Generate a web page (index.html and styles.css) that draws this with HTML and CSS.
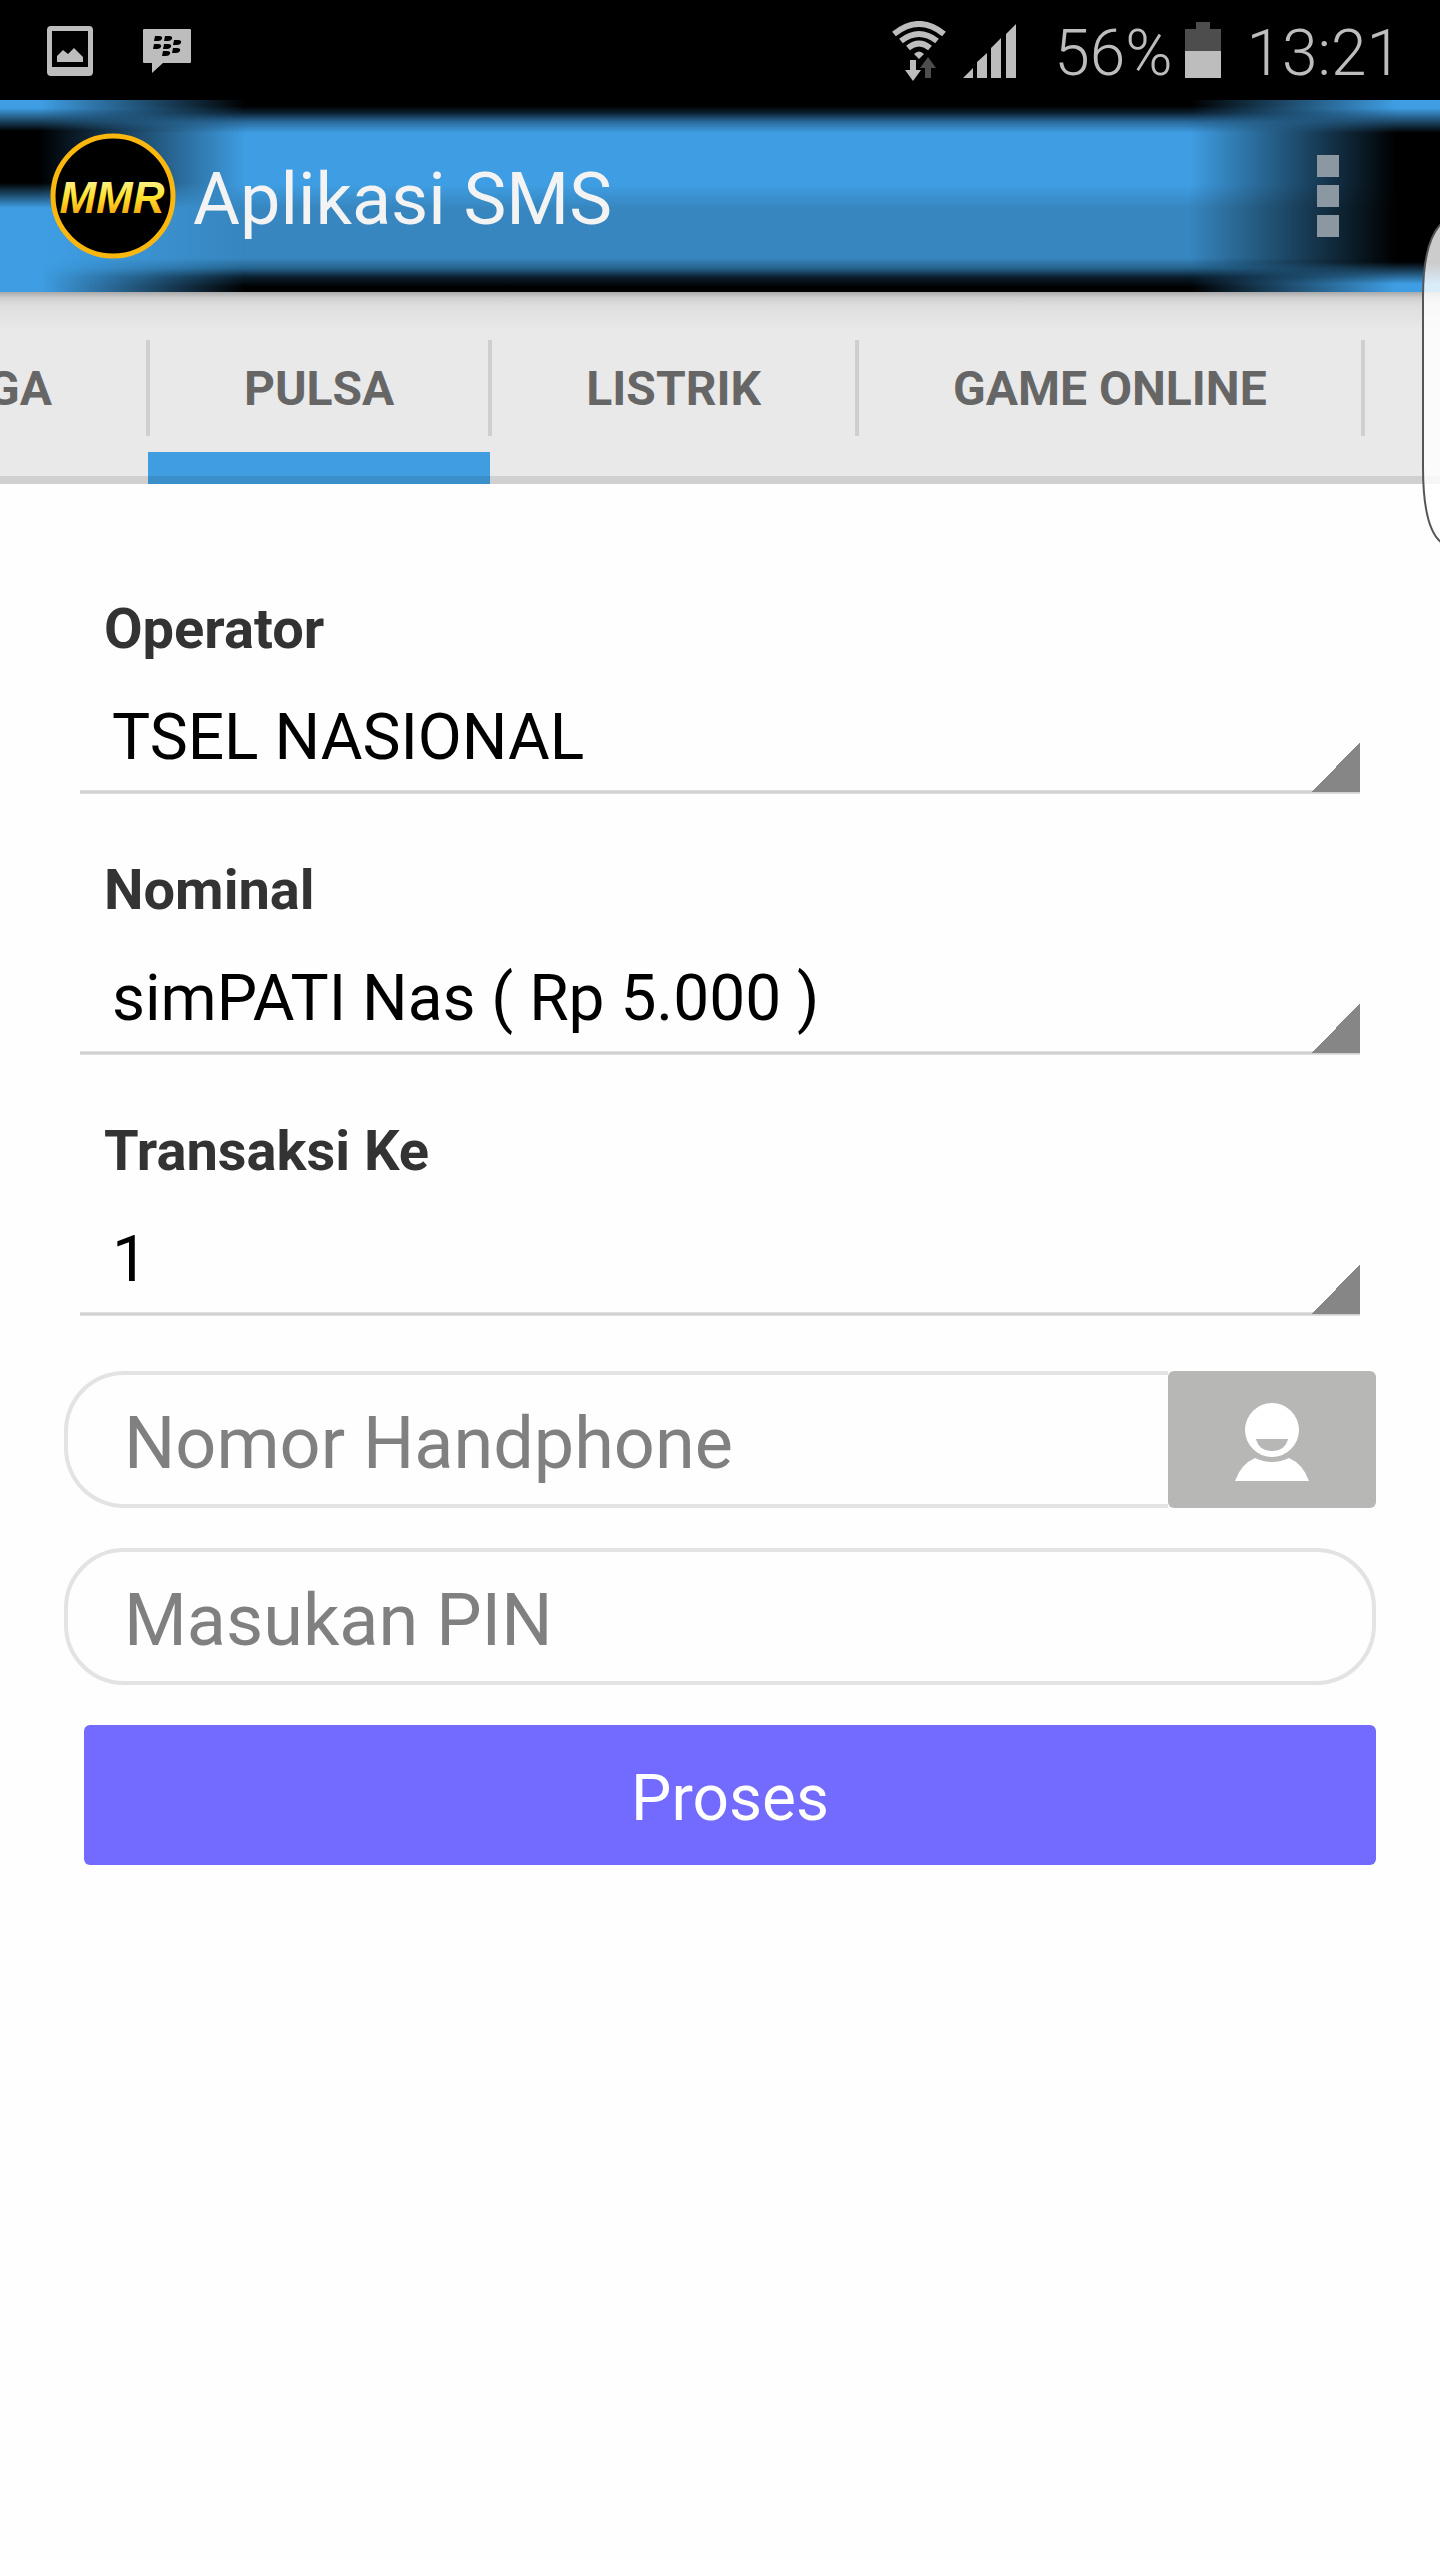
FILE: index.html
```html
<!DOCTYPE html>
<html lang="id">
<head>
<meta charset="utf-8">
<meta name="viewport" content="width=device-width, initial-scale=1">
<title>Aplikasi SMS</title>
<link rel="stylesheet" href="styles.css">
</head>
<body>
<div class="status">
  <svg class="status-picture" width="46" height="50" viewBox="0 0 46 50" aria-hidden="true">
    <path fill="#bdbdbd" fill-rule="evenodd" d="M4 0H42Q46 0 46 4V46Q46 50 42 50H4Q0 50 0 46V4Q0 0 4 0ZM5 5V41H41V5Z"/>
    <path fill="#bdbdbd" d="M10 36V30L16 24L21 28L27 22L36 31V36Z"/>
  </svg>
  <svg class="status-chat" width="48" height="44" viewBox="0 0 48 44" aria-hidden="true">
    <path fill="#bdbdbd" d="M1 0H47Q48 0 48 1V33Q48 34 47 34H20L9 44V34H1Q0 34 0 33V1Q0 0 1 0Z"/>
    <g fill="#000">
      <path id="seed" d="M12 7H16Q20 7 19 10Q18 12 15 12H11Z"/>
      <use href="#seed" x="10"/>
      <use href="#seed" x="-1" y="8"/>
      <use href="#seed" x="9" y="8"/>
      <use href="#seed" x="19" y="4"/>
      <use href="#seed" x="18" y="12"/>
      <use href="#seed" x="8" y="15"/>
    </g>
  </svg>
  <span class="status-space"></span>
  <svg class="status-wifi" width="56" height="60" viewBox="0 0 56 60" aria-hidden="true">
    <g fill="none" stroke="#bdbdbd" stroke-width="6">
      <path d="M3 13Q28 -7 53 13"/>
      <path d="M10 20Q28 6 46 20"/>
      <path d="M17 27Q28 18 39 27"/>
    </g>
    <path fill="#bdbdbd" d="M23 33Q28 28 33 33L28 38Z"/>
    <path fill="#bdbdbd" d="M19 39H25V49H30L22 60L14 49H19Z"/>
    <path fill="#4d4d4d" d="M34 57V47H29L37 36L45 47H40V57Z"/>
  </svg>
  <svg class="status-signal" width="53" height="54" viewBox="0 0 53 54" aria-hidden="true">
    <path fill="#bdbdbd" d="M0 54L10 44V54ZM14 38L24 29V54H14ZM28 24L38 14V54H28ZM43 10L53 0V54H43Z"/>
  </svg>
  <span class="status-text">56%</span>
  <svg class="status-battery" width="36" height="56" viewBox="0 0 36 56" aria-hidden="true">
    <path fill="#4d4d4d" d="M11 0H25V7H36V29H0V7H11Z"/>
    <path fill="#bdbdbd" d="M0 29H36V56H0Z"/>
  </svg>
  <span class="status-text">13:21</span>
</div>

<header class="appbar">
  <svg class="logo" width="126" height="126" viewBox="0 0 126 126" role="img" aria-label="MMR">
    <defs>
      <linearGradient id="gold" x1="0" y1="0" x2="0" y2="1">
        <stop offset="0.1" stop-color="#fff59a"/>
        <stop offset="0.5" stop-color="#ffe02a"/>
        <stop offset="0.9" stop-color="#f79d0c"/>
      </linearGradient>
    </defs>
    <circle cx="63" cy="63" r="60" fill="#000" stroke="#fbb70d" stroke-width="5"/>
    <text class="logo-text" x="62" y="80" text-anchor="middle" fill="url(#gold)">MMR</text>
  </svg>
  <h1 class="title">Aplikasi SMS</h1>
  <button class="more" type="button" aria-label="Menu"><i></i><i></i><i></i></button>
</header>

<nav class="tabs">
  <a class="tab tab-first" href="#">GA</a>
  <a class="tab tab-active" href="#" aria-current="page">PULSA</a>
  <a class="tab" href="#">LISTRIK</a>
  <a class="tab tab-last" href="#">GAME ONLINE</a>
</nav>

<form class="form">
  <div class="field">
    <label for="operator">Operator</label>
    <select id="operator"><option>TSEL NASIONAL</option></select>
  </div>
  <div class="field">
    <label for="nominal">Nominal</label>
    <select id="nominal"><option>simPATI Nas ( Rp 5.000 )</option></select>
  </div>
  <div class="field">
    <label for="transaksi">Transaksi Ke</label>
    <select id="transaksi"><option>1</option></select>
  </div>
  <div class="phone">
    <input class="box" type="tel" placeholder="Nomor Handphone" aria-label="Nomor Handphone">
    <button class="contact" type="button" aria-label="Kontak">
      <svg width="74" height="78" viewBox="0 0 74 78" aria-hidden="true">
        <ellipse cx="37" cy="27" rx="27" ry="27" fill="#fff"/>
        <path fill="#b7b7b5" d="M21 36H53Q50 48 37 48Q24 48 21 36Z"/>
        <path fill="#fff" d="M0 78Q6 61 20 55Q37 63 54 55Q68 61 74 78Z"/>
      </svg>
    </button>
  </div>
  <input class="box" type="password" placeholder="Masukan PIN" aria-label="Masukan PIN">
  <button class="submit" type="submit">Proses</button>
</form>

<svg class="edge" width="18" height="324" viewBox="0 0 18 324" aria-hidden="true">
  <path fill="#fff" fill-opacity="0.8" stroke="#555" stroke-width="2" d="M20 2Q1 20 1 76V246Q1 308 20 322"/>
</svg>
</body>
</html>
```
FILE: styles.css
```css
* {
  box-sizing: border-box;
}

body {
  margin: 0;
  position: relative;
  min-height: 100vh;
  background: #fefefe;
  font-family: Roboto, "Noto Sans", sans-serif;
  overflow-x: hidden;
}

button,
input,
select {
  margin: 0;
  border: 0;
  font-family: inherit;
}

/* Status bar */
.status {
  display: flex;
  align-items: center;
  height: 100px;
  padding: 2px 38px 0 47px;
  background: #000;
  color: #bdbdbd;
  font-size: 64px;
  font-weight: 300;
  line-height: 90px;
}

.status-chat {
  margin-left: 50px;
}

.status-space {
  flex: 1;
}

.status-text {
  padding-top: 6px;
}

.status-signal {
  margin: 0 38px 0 16px;
}

.status-battery {
  margin: 0 26px 2px 12px;
}

/* App bar */
.appbar {
  position: relative;
  display: flex;
  align-items: center;
  height: 192px;
  padding: 0 101px 0 50px;
  background: linear-gradient(#000 6px, #0c2233 13px, #2a6b9c 22px, #3f9ee3 33px, #3f9ee3 84px, #3786bf 108px, #3786bf 158px, #25648f 168px, #0a1f2e 177px, #000 187px);
}

.appbar::before,
.appbar::after {
  content: "";
  position: absolute;
  top: 0;
  bottom: 0;
}

.appbar::before {
  left: 0;
  width: 246px;
  background: linear-gradient(#3f9ee3 8px, #000 31px, #000 83px, #3f9ee3 108px);
  mask-image: linear-gradient(90deg, #000 40px, transparent);
}

.appbar::after {
  right: 0;
  width: 250px;
  background: linear-gradient(#3f9ee3 8px, #000 33px, #000 162px, #3f9ee3 184px);
  mask-image: linear-gradient(90deg, transparent, #000 206px);
}

.appbar > * {
  position: relative;
  z-index: 1;
}

.logo-text {
  font: italic bold 44px "Liberation Sans Narrow", "Liberation Sans", sans-serif;
}

.title {
  flex: 1;
  margin: 0 0 0 17px;
  padding-top: 8px;
  color: #f3f3f3;
  font-size: 72px;
  font-weight: 400;
  line-height: 84px;
}

.more {
  display: flex;
  flex-direction: column;
  gap: 8px;
  padding: 0;
  background: none;
}

.more i {
  width: 22px;
  height: 22px;
  background: #8b98a2;
}

/* Tabs */
.tabs {
  display: flex;
  height: 192px;
  overflow: hidden;
  background:
    linear-gradient(#d0d0d0, #d0d0d0) bottom / 100% 8px no-repeat,
    linear-gradient(#a8a8a8, #cfcfcf 6px, #dedede 14px, #e9e9e9 38px);
}

.tab {
  flex: none;
  padding: 0 96px;
  background:
    linear-gradient(#cfcfcf, #cfcfcf) left / 2px 96px no-repeat,
    linear-gradient(#cfcfcf, #cfcfcf) right / 2px 96px no-repeat;
  color: #666;
  font-size: 48px;
  font-weight: 700;
  line-height: 194px;
  text-decoration: none;
}

.tab-first {
  display: flex;
  justify-content: flex-end;
  width: 148px;
  padding-left: 0;
  background: linear-gradient(#cfcfcf, #cfcfcf) right / 2px 96px no-repeat;
}

.tab-last {
  padding-right: 98px;
  background:
    linear-gradient(#cfcfcf, #cfcfcf) left / 2px 96px no-repeat,
    linear-gradient(#cfcfcf, #cfcfcf) right / 4px 96px no-repeat;
}

.tab-active {
  background:
    linear-gradient(#cfcfcf, #cfcfcf) left / 2px 96px no-repeat,
    linear-gradient(#cfcfcf, #cfcfcf) right / 2px 96px no-repeat,
    linear-gradient(#3a8eca, #3a8eca) bottom / 100% 8px no-repeat,
    linear-gradient(#409de0, #409de0) bottom / 100% 32px no-repeat;
}

/* Form */
.form {
  padding: 112px 64px 64px;
}

.field {
  display: flex;
  flex-direction: column;
  margin: 0 16px 63px;
}

.field label {
  padding-left: 24px;
  color: #333;
  font-size: 56px;
  font-weight: 700;
  line-height: 66px;
}

.field select {
  appearance: none;
  height: 132px;
  padding: 18px 64px 0 32px;
  border-radius: 0;
  background:
    linear-gradient(to bottom right, transparent 50%, #868686 50%) right 0 bottom 2px / 48px 50px no-repeat,
    linear-gradient(#e6e6e6, #cacaca, #e6e6e6) bottom / 100% 4px no-repeat;
  color: #000;
  font-size: 64px;
}

.phone {
  display: flex;
  margin-top: -8px;
}

.box {
  display: block;
  width: 100%;
  height: 137px;
  padding: 8px 56px 0;
  border: 4px solid #e3e3e3;
  border-radius: 60px;
  background: #fefefe;
  color: #000;
  font-size: 72px;
}

.box::placeholder {
  color: #808080;
  opacity: 1;
}

.phone .box {
  flex: 1;
  min-width: 0;
  border-right: 0;
  border-radius: 60px 0 0 60px;
}

.contact {
  display: flex;
  align-items: center;
  justify-content: center;
  width: 208px;
  padding: 4px 0 0;
  border-radius: 6px;
  background: #b7b7b5;
}

.phone + .box {
  margin-top: 40px;
}

.submit {
  display: block;
  width: calc(100% - 20px);
  height: 140px;
  margin: 40px 0 0 20px;
  padding: 6px 0 0;
  border-radius: 6px;
  background: #736bff;
  color: #fff;
  font-size: 64px;
}

/* Edge panel handle, floating over the screen's right side */
.edge {
  position: absolute;
  top: 221px;
  right: 0;
  z-index: 2;
}
```
